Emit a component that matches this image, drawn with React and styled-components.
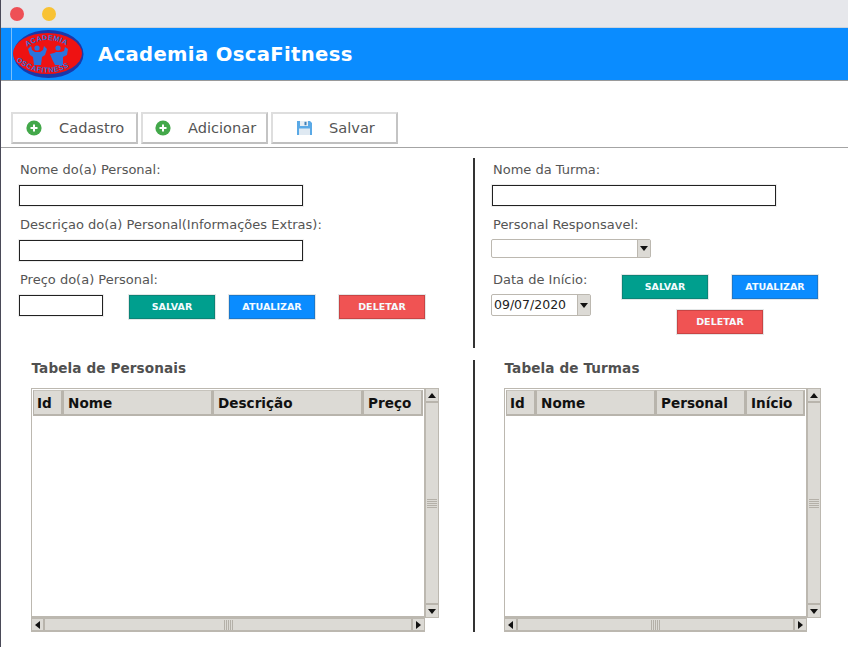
import React from "react";
import styled, { createGlobalStyle } from "styled-components";

const Global = createGlobalStyle`
  html, body { margin: 0; padding: 0; background: #fff; }
  body { font-family: "DejaVu Sans", sans-serif; }
  * { box-sizing: border-box; }
`;

const Page = styled.div`
  width: 848px; height: 647px; display: flex; flex-direction: column;
  background: #fff; overflow: hidden; border-left: 1px solid #4a4a58;
`;
const TitleBar = styled.div`
  height: 28px; flex: none; background: #e6e7eb; display: flex; align-items: center;
  gap: 18px; padding-left: 9px; border-bottom: 1px solid #c9d3de;
`;
const Dot = styled.span`
  width: 14px; height: 14px; border-radius: 50%; background: ${p => p.$c};
`;
const Header = styled.header`
  height: 53px; flex: none; background: #0a8cff; border-bottom: 1px solid #9a9a9a;
  display: flex; align-items: center; padding-left: 10px;
`;
const LogoBox = styled.div`
  width: 76px; height: 52px; border-left: 1px solid #7cc0f8; flex: none;
  display: flex; align-items: center; padding-left: 1px;
`;
const Brand = styled.h1`
  margin: 0 0 0 11px; font: bold 19.6px "DejaVu Sans", sans-serif; color: #fff; letter-spacing: 0.35px;
`;
const Toolbar = styled.nav`
  height: 67px; flex: none; display: flex; gap: 3px; padding: 31px 0 0 10px;
  border-bottom: 1px solid #a4a4a4;
`;
const ToolButton = styled.div`
  width: 127px; height: 32px; display: flex; align-items: center;
  padding-left: ${p => p.$pad}px; gap: ${p => p.$gap}px;
  border: 2px solid #dedede; border-right-color: #c4c4c4; border-bottom-color: #c0c0c0;
  font-size: 14.6px; color: #555; background: #fff; line-height: 26px;
`;
const Rows = styled.div` display: flex; flex-direction: column; flex: 1; `;
const TopRow = styled.section`
  display: grid; grid-template-columns: 472px 1fr; height: 212px; padding-top: 10px;
`;
const BottomRow = styled.section`
  display: grid; grid-template-columns: 472px 1fr;
`;
const FormCol = styled.div`
  height: 190px; padding-left: ${p => p.$pad}px; display: flex; flex-direction: column;
  ${p => p.$divider && `border-left: 2px solid #333;`}
`;
const Label = styled.label`
  display: block; font-size: 13px; line-height: 20px; color: #555; height: 20px;
  margin: 2px 0 ${p => p.$bottom ?? 5}px 1px;
`;
const TextInput = styled.div`
  width: ${p => p.$w}px; height: 21px; border: 1px solid #222; background: #fff;
  box-shadow: 0 0 0 1px #eee; flex: none;
`;
const Gap = styled.div` height: ${p => p.$h}px; flex: none; `;
const ButtonRow = styled.div` display: flex; align-items: flex-start; `;
const ActionBtn = styled.div`
  width: 86px; height: 24px; flex: none; display: flex; align-items: center; justify-content: center;
  background: ${p => p.$bg}; color: #f4fbff; font-size: 9.5px; font-weight: bold; letter-spacing: 0.05px;
  border: 1px solid ${p => p.$edge}; box-shadow: 0 0 0 1px #e4e7e7;
  margin-left: ${p => p.$ml || 0}px; padding-bottom: 1px;
`;
const Combo = styled.div`
  display: flex; width: ${p => p.$w}px; height: ${p => p.$h}px; border: 1px solid #bcb8b0;
  border-radius: 2px; background: #fff; font-size: 12.5px; line-height: 20px; color: #222;
  flex: none; margin-left: -1px;
`;
const ComboText = styled.div` flex: 1; padding-left: 2px; `;
const ComboArrow = styled.div`
  width: 13px; background: #dcdad5; border-left: 1px solid #bcb8b0; display: flex; align-items: center; justify-content: center;
`;
const DateRow = styled.div` display: flex; `;
const DateCol = styled.div` width: 130px; flex: none; `;
const DateButtons = styled.div` width: 200px; flex: none; display: flex; flex-wrap: wrap; row-gap: 11px; padding-top: 7px; `;
const DeleteSlot = styled.div` width: 100%; display: flex; justify-content: center; padding-right: 4px; `;
const TableCol = styled.div`
  height: 272px; padding-left: ${p => p.$pad}px; display: flex; flex-direction: column;
  ${p => p.$divider && `border-left: 2px solid #333;`}
`;
const TableTitle = styled.h2`
  margin: 0; height: 28px; padding-left: 0.5px; font: bold 13.6px/16px "DejaVu Sans", sans-serif; color: #505050;
  letter-spacing: 0.1px;
`;
const TableGrid = styled.div`
  display: grid; grid-template-columns: ${p => p.$w}px 14px; grid-template-rows: 230px 14px;
`;
const TableBody = styled.div`
  border: 1px solid #bcb8b0; border-width: 1px 1px 2px 1px; background: #fff; padding: 1px;
`;
const HeadRow = styled.div` display: flex; height: 26px; `;
const HeadCell = styled.div`
  width: ${p => p.$w}px; flex: none; height: 26px; background: #dcdad5; color: #111;
  border: 1px solid #b8b4ac; border-top-color: #c6c3bc; border-bottom-width: 2px; border-right-width: 2px;
  font-size: 13.6px; font-weight: bold; display: flex; align-items: center; padding-left: ${p => p.$pad ?? 4}px;
`;
const VScroll = styled.div`
  display: flex; flex-direction: column; background: #dcdad5; border: 1px solid #bcb8b0;
  height: 230px;
`;
const HScroll = styled.div`
  display: flex; background: #dcdad5; border: 1px solid #bcb8b0; border-bottom-width: 2px;
  height: 14px;
`;
const ScrollEnd = styled.div`
  flex: none; width: ${p => p.$horizontal ? "13px" : "auto"}; height: ${p => p.$horizontal ? "auto" : "14px"};
  display: flex; align-items: center; justify-content: center; background: #dcdad5;
  ${p => p.$border}: 2px solid #b8b4ac;
`;
const Track = styled.div`
  flex: 1; display: flex; align-items: center; justify-content: center;
  flex-direction: ${p => p.$horizontal ? "row" : "column"};
  gap: 1px; background: #dcdad5;
`;
const Grip = styled.span`
  background: #b4b0a8;
  ${p => p.$horizontal ? "width: 1px; height: 10px;" : "width: 10px; height: 1px;"}
`;
const Filler = styled.div``;

const Arrow = ({ d }) => {
  const pts = { down: "0,0 8,0 4,5", up: "0,5 8,5 4,0", left: "5,0 5,8 0,4", right: "0,0 0,8 5,4" };
  const h = d === "up" || d === "down";
  return (
    <svg width={h ? 8 : 5} height={h ? 5 : 8} viewBox={h ? "0 0 8 5" : "0 0 5 8"}>
      <polygon points={pts[d]} fill="#111" />
    </svg>
  );
};

const PlusIcon = () => (
  <svg width="16" height="16" viewBox="0 0 16 16">
    <circle cx="8" cy="8" r="7.6" fill="#43a84a" />
    <path d="M8 4.5v7M4.5 8h7" stroke="#fff" strokeWidth="2" />
  </svg>
);
const SaveIcon = () => (
  <svg width="15" height="16" viewBox="0 0 15 16">
    <path d="M0 1h13l2 2v12H0z" fill="#5aa9e6" />
    <rect x="3" y="1" width="8" height="5" fill="#e8eef4" />
    <rect x="7.5" y="1.8" width="2" height="3.4" fill="#3f7fb5" />
    <rect x="2" y="8.5" width="11" height="6.5" fill="#dfe9f2" />
  </svg>
);

const Logo = () => (
  <svg width="72" height="50" viewBox="0 0 72 50">
    <defs>
      <path id="arcTop" d="M14 18 Q34 4 56 18" />
      <path id="arcBot" d="M3 32 Q34 56 69 30" />
    </defs>
    <ellipse cx="35.5" cy="25" rx="35" ry="24" fill="#1c38a8" />
    <ellipse cx="34.5" cy="24.5" rx="34.5" ry="20.5" fill="#ee1212" />
    <text fontFamily="Liberation Sans" fontWeight="bold" fontSize="7.2" fill="#2a74dc" letterSpacing="0.4">
      <textPath href="#arcTop">ACADEMIA</textPath>
    </text>
    <text fontFamily="Liberation Sans" fontWeight="bold" fontSize="7.2" fill="#2a74dc" letterSpacing="0.55">
      <textPath href="#arcBot">OSCAFITNESS</textPath>
    </text>
    <circle cx="24" cy="19" r="2.6" fill="#2a74dc" />
    <path d="M15 20 L18 17 L19 21 L22 23 L27 23 L30 21 L31 17 L34 20 L32 26 L29 28 L28 36 L21 36 L20 28 L17 26 Z" fill="#2a74dc" />
    <circle cx="45" cy="19" r="2.6" fill="#2a74dc" />
    <path d="M39 30 L37 25 L41 24 L43 23 L48 23 L51 22 L52 18 L55 20 L54 26 L50 28 L50 36 L42 36 Z" fill="#2a74dc" />
  </svg>
);

const DataTable = ({ title, columns, width, pad, divider }) => (
  <TableCol $pad={pad} $divider={divider}>
    <TableTitle>{title}</TableTitle>
    <TableGrid $w={width}>
      <TableBody>
        <HeadRow>
          {columns.map(c => <HeadCell key={c.n} $w={c.w} $pad={c.pad}>{c.n}</HeadCell>)}
        </HeadRow>
      </TableBody>
      <VScroll>
        <ScrollEnd $border="border-bottom"><Arrow d="up" /></ScrollEnd>
        <Track>{[0, 1, 2, 3, 4].map(i => <Grip key={i} />)}</Track>
        <ScrollEnd $border="border-top"><Arrow d="down" /></ScrollEnd>
      </VScroll>
      <HScroll>
        <ScrollEnd $horizontal $border="border-right"><Arrow d="left" /></ScrollEnd>
        <Track $horizontal>{[0, 1, 2, 3, 4].map(i => <Grip key={i} $horizontal />)}</Track>
        <ScrollEnd $horizontal $border="border-left"><Arrow d="right" /></ScrollEnd>
      </HScroll>
      <Filler />
    </TableGrid>
  </TableCol>
);

const GREEN = { $bg: "#009f8e", $edge: "#0b8477" };
const BLUE = { $bg: "#0a8cff", $edge: "#1a78cc" };
const RED = { $bg: "#f05353", $edge: "#c94444" };

export default function App() {
  return (
    <Page>
      <Global />
      <TitleBar>
        <Dot $c="#ee5056" />
        <Dot $c="#f8c234" />
      </TitleBar>
      <Header>
        <LogoBox><Logo /></LogoBox>
        <Brand>Academia OscaFitness</Brand>
      </Header>
      <Toolbar>
        <ToolButton $pad={13} $gap={17}><PlusIcon />Cadastro</ToolButton>
        <ToolButton $pad={12} $gap={17}><PlusIcon />Adicionar</ToolButton>
        <ToolButton $pad={24} $gap={17}><SaveIcon />Salvar</ToolButton>
      </Toolbar>
      <Rows>
        <TopRow>
          <FormCol $pad={18}>
            <Label>Nome do(a) Personal:</Label>
            <TextInput $w={284} />
            <Gap $h={7} />
            <Label>Descriçao do(a) Personal(Informações Extras):</Label>
            <TextInput $w={284} />
            <Gap $h={7} />
            <Label>Preço do(a) Personal:</Label>
            <ButtonRow>
              <TextInput $w={84} />
              <ActionBtn {...GREEN} $ml={26}>SALVAR</ActionBtn>
              <ActionBtn {...BLUE} $ml={14}>ATUALIZAR</ActionBtn>
              <ActionBtn {...RED} $ml={24}>DELETAR</ActionBtn>
            </ButtonRow>
          </FormCol>
          <FormCol $pad={17} $divider>
            <Label>Nome da Turma:</Label>
            <TextInput $w={284} />
            <Gap $h={7} />
            <Label $bottom={4}>Personal Responsavel:</Label>
            <Combo $w={160} $h={19}>
              <ComboText />
              <ComboArrow><Arrow d="down" /></ComboArrow>
            </Combo>
            <Gap $h={10} />
            <DateRow>
              <DateCol>
                <Label $bottom={4}>Data de Início:</Label>
                <Combo $w={100} $h={22}>
                  <ComboText>09/07/2020</ComboText>
                  <ComboArrow><Arrow d="down" /></ComboArrow>
                </Combo>
              </DateCol>
              <DateButtons>
                <ActionBtn {...GREEN}>SALVAR</ActionBtn>
                <ActionBtn {...BLUE} $ml={24}>ATUALIZAR</ActionBtn>
                <DeleteSlot><ActionBtn {...RED}>DELETAR</ActionBtn></DeleteSlot>
              </DateButtons>
            </DateRow>
          </FormCol>
        </TopRow>
        <BottomRow>
          <DataTable
            title="Tabela de Personais"
            pad={30}
            width={394}
            columns={[{ n: "Id", w: 30, pad: 3 }, { n: "Nome", w: 150 }, { n: "Descrição", w: 150 }, { n: "Preço", w: 60 }]}
          />
          <DataTable
            title="Tabela de Turmas"
            pad={29}
            divider
            width={303}
            columns={[{ n: "Id", w: 30, pad: 3 }, { n: "Nome", w: 120 }, { n: "Personal", w: 90 }, { n: "Início", w: 59 }]}
          />
        </BottomRow>
      </Rows>
    </Page>
  );
}
